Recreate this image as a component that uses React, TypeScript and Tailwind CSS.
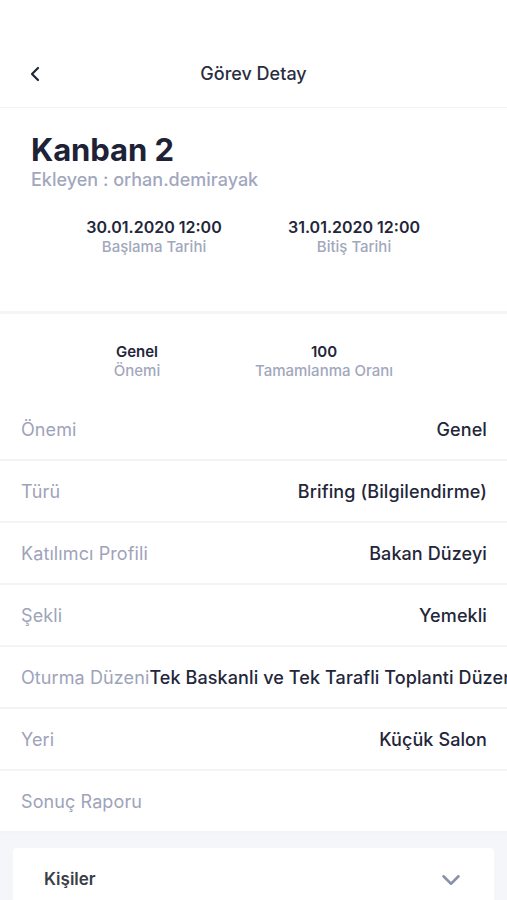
import { ChevronDown, ChevronLeft } from "lucide-react";

const rows: { label: string; value: string }[] = [
  { label: "Önemi", value: "Genel" },
  { label: "Türü", value: "Brifing (Bilgilendirme)" },
  { label: "Katılımcı Profili", value: "Bakan Düzeyi" },
  { label: "Şekli", value: "Yemekli" },
  { label: "Oturma Düzeni", value: "Tek Baskanli ve Tek Tarafli Toplanti Düzeni" },
  { label: "Yeri", value: "Küçük Salon" },
  { label: "Sonuç Raporu", value: "" },
];

function Stat({
  value,
  label,
  className,
  big,
}: {
  value: string;
  label: string;
  className?: string;
  big?: boolean;
}) {
  return (
    <div className={"flex flex-col items-center " + (className ?? "")}>
      <span
        className={
          (big ? "text-[16px]" : "text-[15px]") +
          " font-semibold leading-[19px] text-[#23263a]"
        }
      >
        {value}
      </span>
      <span className="text-[15px] font-medium leading-[19px] text-[#a2a7bd]">{label}</span>
    </div>
  );
}

export default function App() {
  return (
    <div className="min-h-screen w-full overflow-hidden bg-white font-['Inter',sans-serif]">
      {/* Header */}
      <div className="flex h-[108px] items-end border-b border-[#f1f2f4] pb-[20px]">
        <div className="relative flex w-full items-center justify-center">
          <button className="absolute left-[23px] top-1/2 -translate-y-1/2 text-[#23263a]">
            <ChevronLeft size={24} strokeWidth={2.2} />
          </button>
          <h1 className="text-[18px] font-medium text-[#2a2d40]">Görev Detay</h1>
        </div>
      </div>

      {/* Title block */}
      <div className="border-b-[3px] border-[#f5f5f6] pb-[55px]">
        <div className="px-[31px] pt-[23px]">
          <h2 className="text-[31px] font-bold leading-[38px] tracking-[-0.1px] text-[#1e2236]">Kanban 2</h2>
          <p className="text-[18px] font-medium leading-[22px] text-[#a2a7bd]">Ekleyen : orhan.demirayak</p>
        </div>
        <div className="mt-[27px] flex pl-[54px]">
          <Stat big className="w-[200px]" value="30.01.2020 12:00" label="Başlama Tarihi" />
          <Stat big className="w-[200px]" value="31.01.2020 12:00" label="Bitiş Tarihi" />
        </div>
      </div>

      {/* Summary */}
      <div className="flex pl-[57px] pt-[28px]">
        <Stat className="w-[160px]" value="Genel" label="Önemi" />
        <Stat className="w-[214px]" value="100" label="Tamamlanma Oranı" />
      </div>

      {/* Detail rows */}
      <div className="mt-[19px]">
        {rows.map((row) => (
          <div
            key={row.label}
            className="flex h-[62px] items-center justify-between overflow-hidden border-b-2 border-[#f3f4f6] pl-[21px] pr-[20px] text-[18px] tracking-[0.1px]"
          >
            <span className="shrink-0 whitespace-nowrap text-[#9ea3ba]">{row.label}</span>
            <span className="whitespace-nowrap font-medium text-[#23263a]">{row.value}</span>
          </div>
        ))}
      </div>

      {/* Kişiler */}
      <div className="bg-[#f5f6f9] px-[13px] pt-[15px] pb-[40px]">
        <div className="flex h-[64px] items-center justify-between rounded-[4px] bg-white pl-[31px] pr-[28px]">
          <span className="text-[17px] font-semibold text-[#3b3d47]">Kişiler</span>
          <ChevronDown size={30} strokeWidth={2} className="text-[#8a90a8]" />
        </div>
      </div>
    </div>
  );
}
